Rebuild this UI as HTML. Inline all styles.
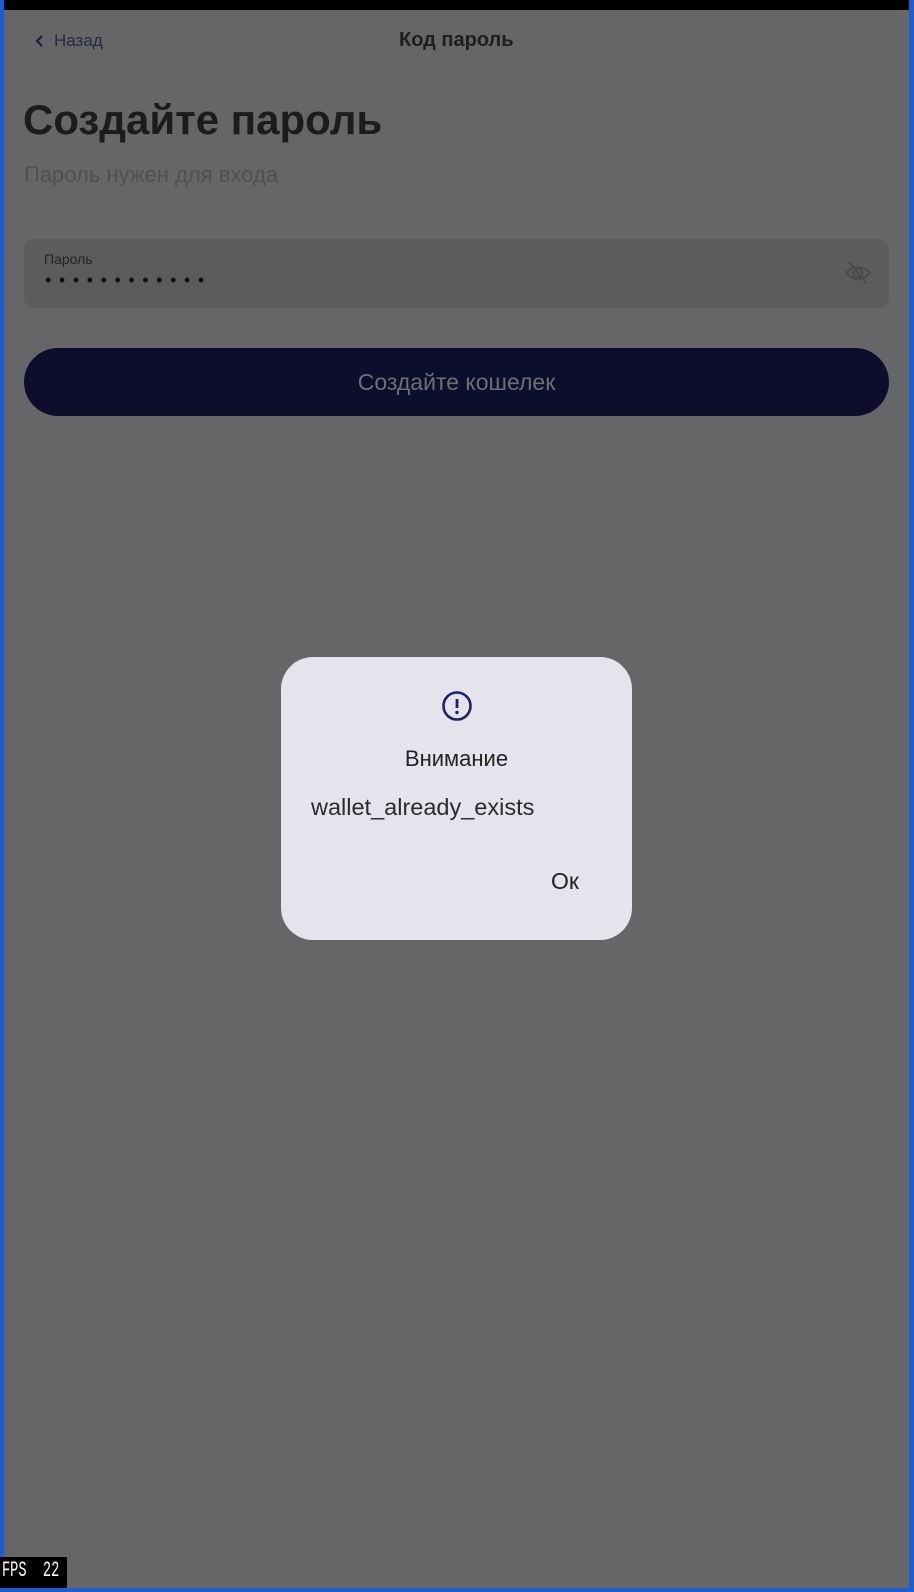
<!DOCTYPE html>
<html><head><meta charset="utf-8"><style>
body{margin:0;width:914px;height:1592px;background:#1b5ed0;position:relative;overflow:hidden;font-family:"Liberation Sans",sans-serif}
.scr{position:absolute;left:4px;top:0;width:905px;height:1588px;background:#666568}
.top{position:absolute;left:0;top:0;width:905px;height:10px;background:#000}
.t{position:absolute;white-space:nowrap}
</style></head><body>
<div class="scr">
<div class="top"></div>
<svg class="t" style="left:30px;top:34px" width="12" height="14" viewBox="0 0 12 14"><path d="M8 2 L3 7 L8 12" stroke="#1d1f45" stroke-width="2.2" fill="none"/></svg>
<div class="t" style="left:50px;top:31px;font-size:17px;color:#262a48">Назад</div>
<div class="t" style="left:395px;top:29px;font-size:20px;font-weight:bold;color:#1e1e1e">Код пароль</div>
<div class="t" style="left:19px;top:96px;font-size:42px;font-weight:bold;color:#1c1c1c">Создайте пароль</div>
<div class="t" style="left:20px;top:162px;font-size:22px;color:#505050">Пароль нужен для входа</div>
<div style="position:absolute;left:20px;top:239px;width:865px;height:69px;background:#5c5c5c;border-radius:10px"></div>
<div class="t" style="left:40px;top:251px;font-size:14px;color:#222">Пароль</div>
<div class="t" style="left:41px;top:270px;font-size:18px;letter-spacing:7.6px;color:#111">••••••••••••</div>
<svg class="t" style="left:840px;top:260px" width="28" height="26" viewBox="0 0 28 26"><path d="M2 13 Q14 1 26 13 Q14 25 2 13Z" stroke="#4a4a4a" stroke-width="2" fill="none"/><circle cx="14" cy="13" r="4.5" stroke="#4a4a4a" stroke-width="2" fill="none"/><path d="M5 2 L23 24" stroke="#4a4a4a" stroke-width="2"/></svg>
<div style="position:absolute;left:20px;top:348px;width:865px;height:68px;background:#0d0e2e;border-radius:34px"></div>
<div class="t" style="left:20px;width:865px;text-align:center;top:369px;font-size:23px;color:#6e6e72">Создайте кошелек</div>
<div style="position:absolute;left:277px;top:657px;width:351px;height:283px;background:#e6e3ec;border-radius:32px"></div>
<svg class="t" style="left:437px;top:690px" width="32" height="32" viewBox="0 0 32 32"><circle cx="16" cy="16" r="13.5" stroke="#1c2270" stroke-width="2.6" fill="none"/><path d="M16 9 V18" stroke="#1c2270" stroke-width="2.8"/><circle cx="16" cy="22.5" r="1.7" fill="#1c2270"/></svg>
<div class="t" style="left:277px;width:351px;text-align:center;top:746px;font-size:22px;color:#222">Внимание</div>
<div class="t" style="left:307px;top:794px;font-size:23.5px;color:#2b2b2b">wallet_already_exists</div>
<div class="t" style="left:547px;top:868px;font-size:23px;color:#222">Ок</div>
<div style="position:absolute;left:-4px;top:1557px;width:67px;height:31px;background:#000"></div>
<div class="t" style="left:-2px;top:1558px;font-family:'Liberation Mono',monospace;font-size:22px;color:#fff;transform:scaleX(0.62);transform-origin:left">FPS&nbsp;&nbsp;22</div>
</div>
</body></html>
